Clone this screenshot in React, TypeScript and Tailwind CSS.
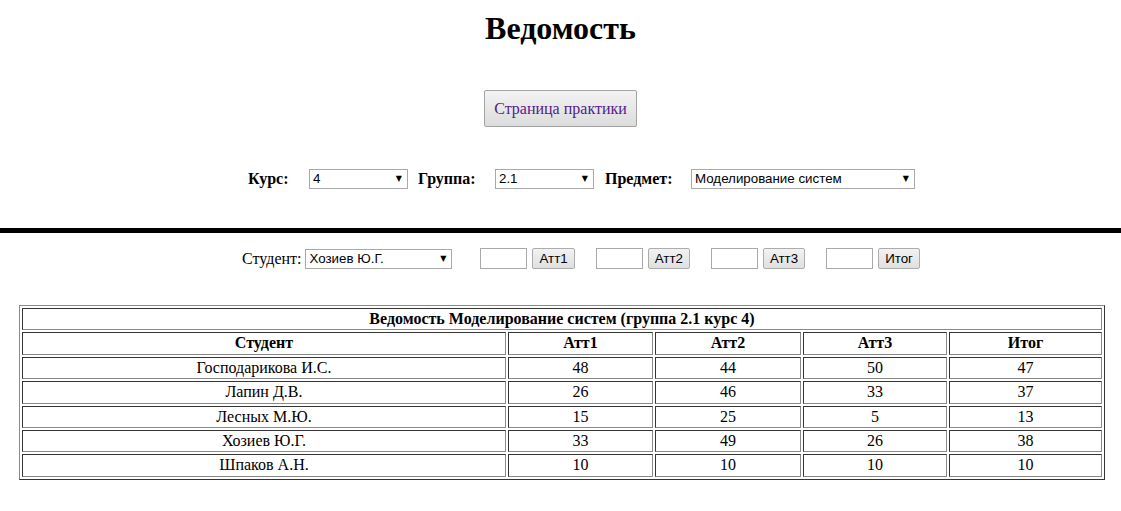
import React from "react";

const rows = [
  ["Господарикова И.С.", "48", "44", "50", "47"],
  ["Лапин Д.В.", "26", "46", "33", "37"],
  ["Лесных М.Ю.", "15", "25", "5", "13"],
  ["Хозиев Ю.Г.", "33", "49", "26", "38"],
  ["Шпаков А.Н.", "10", "10", "10", "10"],
];

function Select({ value, w }: { value: string; w: string }) {
  return (
    <div className={`relative ${w} h-[20px]`}>
      <select
        defaultValue={value}
        className="block appearance-none w-full h-full border border-[#a9a9a9] bg-white pl-[3px] text-[13.33px] leading-[18px] text-black font-['Liberation_Sans',Arial,sans-serif] outline-none"
      >
        <option>{value}</option>
      </select>
      <span className="pointer-events-none absolute right-[6px] top-[5px] text-[8px] leading-[10px] text-black font-['DejaVu_Sans',sans-serif]">
        ▼
      </span>
    </div>
  );
}

function SmallButton({ label }: { label: string }) {
  return (
    <button className="block h-[21px] px-[6px] border border-[#acacac] rounded-[2px] bg-gradient-to-b from-[#f2f2f2] to-[#e0e0e0] text-[13.33px] leading-[17px] text-black font-['Liberation_Sans',Arial,sans-serif]">
      {label}
    </button>
  );
}

function Input() {
  return <input className="block w-[47px] h-[21px] border border-[#a9a9a9] bg-white outline-none" />;
}

const cellBorder =
  "border border-t-[#353535] border-l-[#353535] border-b-[#8a8a8a] border-r-[#8a8a8a] p-[1px] text-center leading-[18.4px]";

export default function App() {
  return (
    <div className="w-[1121px] min-h-[511px] bg-white text-black font-['Liberation_Serif','Times_New_Roman',serif] text-[16px]">
      <h1 className="pt-[10px] text-center text-[32px] font-bold leading-[37px]">Ведомость</h1>

      <div className="mt-[43px] flex justify-center">
        <button className="w-[153px] h-[37px] border border-[#a3a3a3] rounded-[2px] bg-gradient-to-b from-[#f3f3f3] to-[#dcdcdc] text-[16px] text-[#551a8b] font-['Liberation_Serif',serif]">
          Страница практики
        </button>
      </div>

      <div className="mt-[42px] flex items-center pl-[248px] h-[20px]">
        <span className="font-bold w-[61px]">Курс:</span>
        <Select value="4" w="w-[99px]" />
        <span className="font-bold ml-[10px] w-[77px]">Группа:</span>
        <Select value="2.1" w="w-[99px]" />
        <span className="font-bold ml-[11px] w-[86px]">Предмет:</span>
        <Select value="Моделирование систем" w="w-[224px]" />
      </div>

      <div className="mt-[39px] h-[5px] bg-black" />

      <div className="mt-[15px] flex items-center pl-[242px] h-[21px]">
        <span className="mr-[4px]">Студент:</span>
        <Select value="Хозиев Ю.Г." w="w-[147px]" />
        <div className="ml-[28px] flex items-center gap-[5px]">
          <Input />
          <SmallButton label="Атт1" />
        </div>
        <div className="ml-[21px] flex items-center gap-[5px]">
          <Input />
          <SmallButton label="Атт2" />
        </div>
        <div className="ml-[21px] flex items-center gap-[5px]">
          <Input />
          <SmallButton label="Атт3" />
        </div>
        <div className="ml-[21px] flex items-center gap-[5px]">
          <Input />
          <SmallButton label="Итог" />
        </div>
      </div>

      <table className="mt-[36px] ml-[19px] w-[1086px] border-separate border-spacing-[2px] border border-t-[#8a8a8a] border-l-[#8a8a8a] border-b-[#353535] border-r-[#353535]">
        <tbody>
          <tr>
            <th colSpan={5} className={`${cellBorder} font-bold`}>
              Ведомость Моделирование систем (группа 2.1 курс 4)
            </th>
          </tr>
          <tr>
            <th className={`${cellBorder} font-bold w-[484px]`}>Студент</th>
            <th className={`${cellBorder} font-bold w-[145px]`}>Атт1</th>
            <th className={`${cellBorder} font-bold w-[146px]`}>Атт2</th>
            <th className={`${cellBorder} font-bold w-[144px]`}>Атт3</th>
            <th className={`${cellBorder} font-bold w-[153px]`}>Итог</th>
          </tr>
          {rows.map((r, i) => (
            <tr key={i}>
              {r.map((c, j) => (
                <td key={j} className={`${cellBorder} font-normal`}>
                  {c}
                </td>
              ))}
            </tr>
          ))}
        </tbody>
      </table>
    </div>
  );
}
